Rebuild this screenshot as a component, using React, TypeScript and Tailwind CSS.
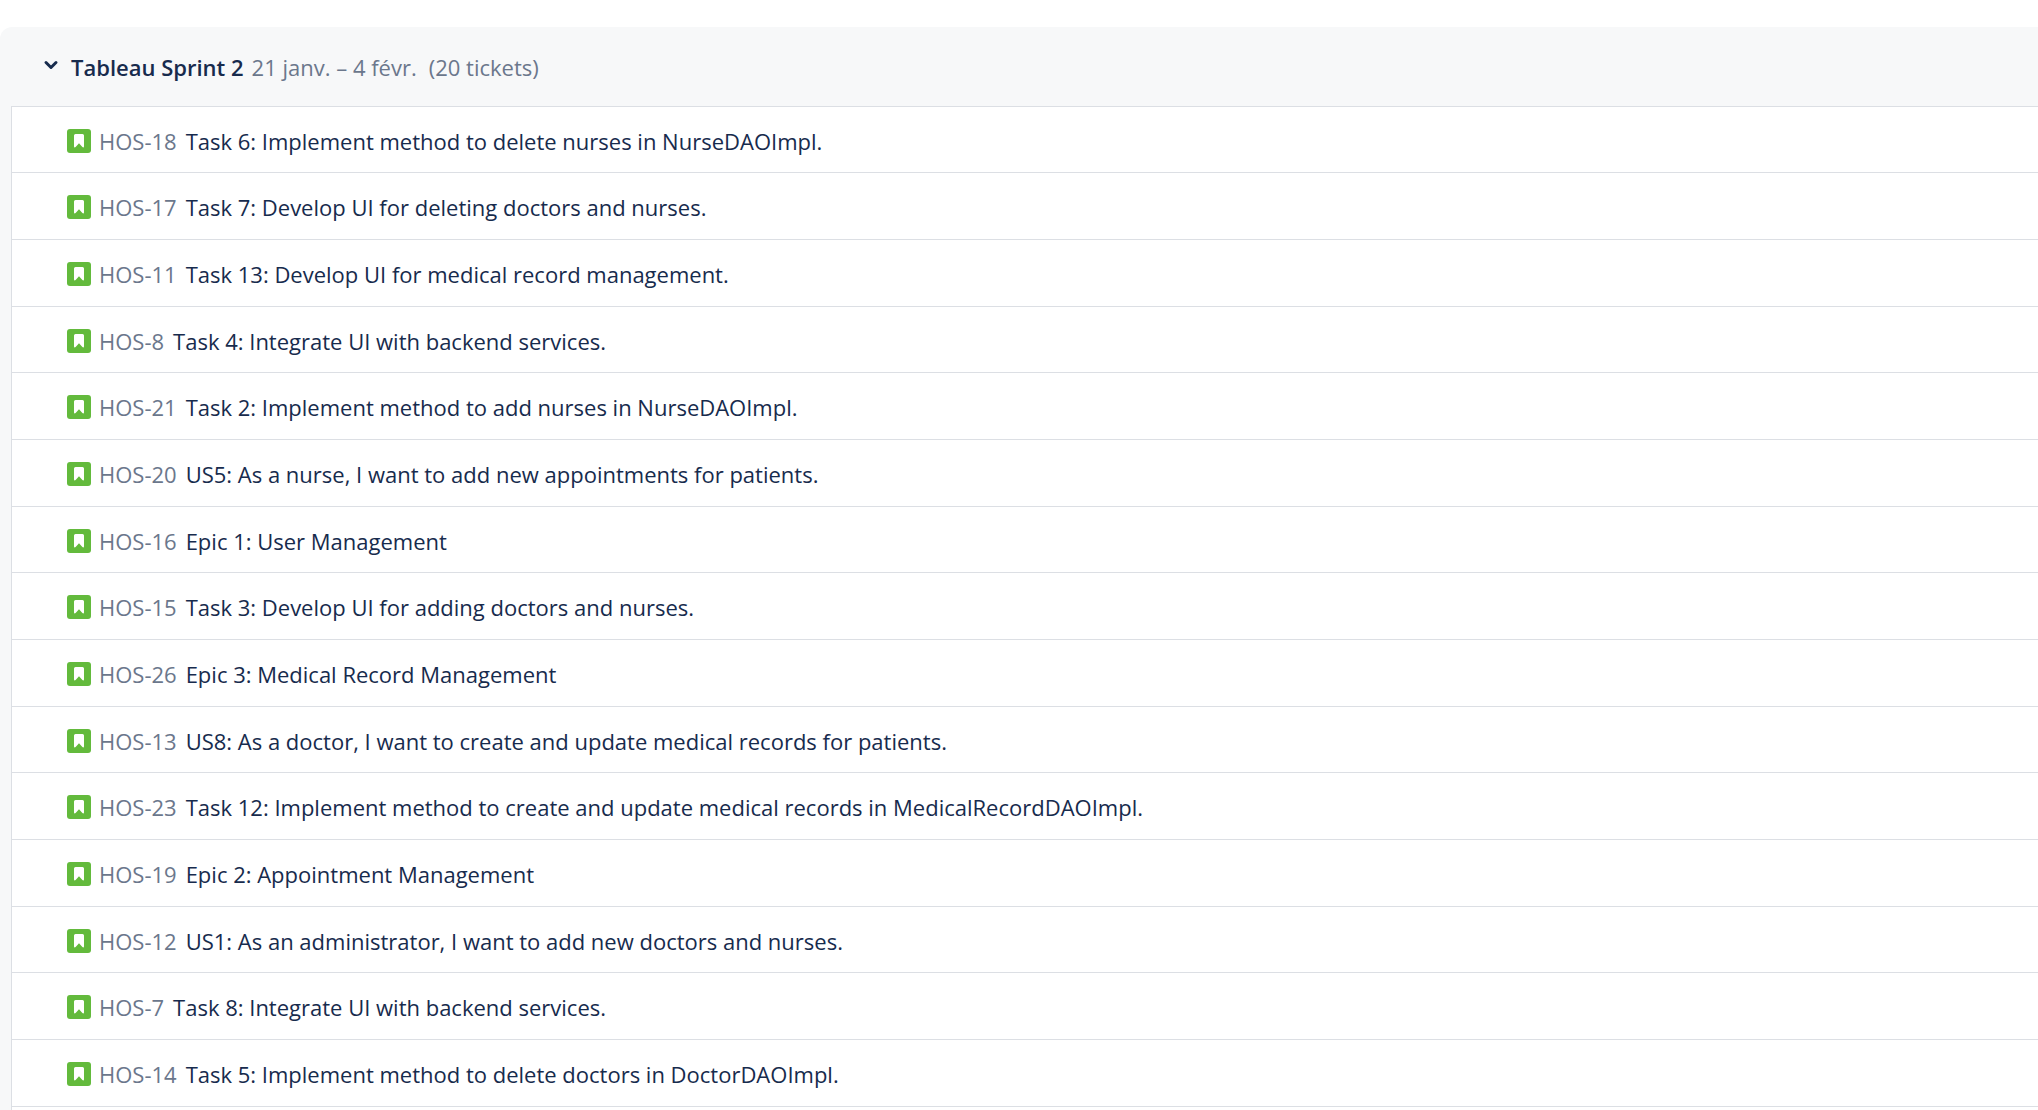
type Ticket = { id: string; summary: string };

const tickets: Ticket[] = [
  { id: "HOS-18", summary: "Task 6: Implement method to delete nurses in NurseDAOImpl." },
  { id: "HOS-17", summary: "Task 7: Develop UI for deleting doctors and nurses." },
  { id: "HOS-11", summary: "Task 13: Develop UI for medical record management." },
  { id: "HOS-8", summary: "Task 4: Integrate UI with backend services." },
  { id: "HOS-21", summary: "Task 2: Implement method to add nurses in NurseDAOImpl." },
  { id: "HOS-20", summary: "US5: As a nurse, I want to add new appointments for patients." },
  { id: "HOS-16", summary: "Epic 1: User Management" },
  { id: "HOS-15", summary: "Task 3: Develop UI for adding doctors and nurses." },
  { id: "HOS-26", summary: "Epic 3: Medical Record Management" },
  { id: "HOS-13", summary: "US8: As a doctor, I want to create and update medical records for patients." },
  { id: "HOS-23", summary: "Task 12: Implement method to create and update medical records in MedicalRecordDAOImpl." },
  { id: "HOS-19", summary: "Epic 2: Appointment Management" },
  { id: "HOS-12", summary: "US1: As an administrator, I want to add new doctors and nurses." },
  { id: "HOS-7", summary: "Task 8: Integrate UI with backend services." },
  { id: "HOS-14", summary: "Task 5: Implement method to delete doctors in DoctorDAOImpl." },
];

function StoryIcon() {
  return (
    <svg viewBox="0 0 24 24" className="size-6 shrink-0" aria-hidden="true">
      <rect width="24" height="24" rx="3" fill="#63ba3c" />
      <path
        d="M8.5 5h7A1.5 1.5 0 0 1 17 6.500V17.500c0 .9-.9 1.200-1.600.500L12 14.300l-3.400 3.700c-.7.700-1.600.400-1.600-.500V6.500A1.500 1.500 0 0 1 8.500 5Z"
        fill="#fff"
      />
    </svg>
  );
}

function ChevronDown() {
  return (
    <svg
      viewBox="0 0 16 16"
      className="size-4 shrink-0"
      fill="none"
      stroke="currentColor"
      strokeWidth="3"
      strokeLinecap="round"
      strokeLinejoin="round"
      aria-hidden="true"
    >
      <path d="M3 3.500 8 8.500 13 3.500" />
    </svg>
  );
}

function TicketRow({ id, summary }: Ticket) {
  return (
    <li className="flex h-[67px] items-center border-b border-[#dcdfe4] pt-0.5 pl-[55px] nth-[3n+1]:h-[66px]">
      <StoryIcon />
      <a href={`#${id}`} className="ml-2 text-[#6b778c]">
        {id}
      </a>
      <span className="ml-[9px]">{summary}</span>
    </li>
  );
}

export default function App() {
  return (
    <main className="flex min-h-screen flex-col bg-white pt-[27px] font-['Open_Sans',sans-serif] text-[22px] leading-8 text-[#172b4d]">
      <section className="flex grow flex-col rounded-tl-xl bg-[#f7f8f9] pl-[11px]">
        <header className="flex h-[79px] items-center pl-8">
          <button type="button" aria-expanded="true" className="flex items-center gap-3">
            <ChevronDown />
            <h2 className="font-semibold">Tableau Sprint 2</h2>
          </button>
          <span className="ml-2 text-[#6b778c]">21 janv. – 4 févr.</span>
          <span className="ml-3 text-[#6b778c]">(20 tickets)</span>
        </header>
        <ul className="grow border-t border-l border-[#dcdfe4] bg-white">
          {tickets.map((ticket) => (
            <TicketRow key={ticket.id} {...ticket} />
          ))}
        </ul>
      </section>
    </main>
  );
}
